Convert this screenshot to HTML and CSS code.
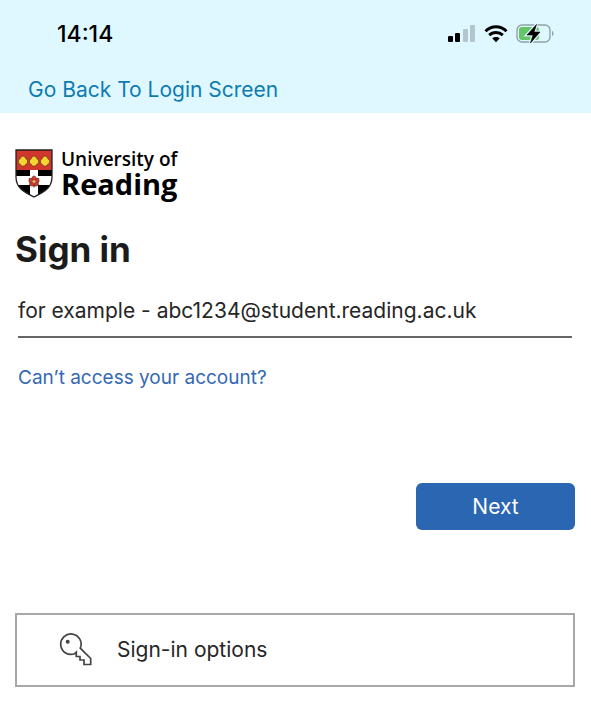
FILE: index.html
```html
<!DOCTYPE html>
<html lang="en">
<head>
    <meta charset="UTF-8">
    <meta name="viewport" content="width=device-width, initial-scale=1.0">
    <title>Sign in</title>
    <link rel="stylesheet" href="styles.css">
</head>
<body>
    <header class="top">
        <div class="status-bar">
            <span class="time">14:14</span>
            <div class="status-icons">
                <svg width="28" height="18" viewBox="0 0 28 18" aria-hidden="true">
                    <rect x="0" y="11" width="5" height="6" rx="1"/>
                    <rect x="7" y="8" width="5" height="9" rx="1"/>
                    <rect x="15" y="4" width="5" height="13" rx="1" fill="#b3c6cb"/>
                    <rect x="22" y="0" width="5" height="17" rx="1" fill="#b3c6cb"/>
                </svg>
                <svg width="24" height="18" viewBox="0 0 24 18" fill="none" stroke="#000" stroke-width="3" aria-hidden="true">
                    <path d="M1.500 6.200C7.500 .2 16.500 .2 22.500 6.200"/>
                    <path d="M5.200 10.200C9 6.600 15 6.600 18.800 10.200"/>
                    <path d="M12 17.200L8.200 13.300C10.400 11.500 13.600 11.500 15.800 13.300Z" fill="#000" stroke="none"/>
                </svg>
                <svg width="38" height="20" viewBox="0 0 38 20" aria-hidden="true">
                    <rect x="1" y="1" width="33" height="17" rx="5" fill="none" stroke="#8fa2a6" stroke-width="1.400"/>
                    <rect x="3" y="3" width="20" height="13" rx="3" fill="#65c466"/>
                    <path d="M36 7v5c2-.6 2-4.400 0-5z" fill="#8fa2a6"/>
                    <path d="M20.500 .5L11 11h6L14.500 19 24 8h-6z" stroke="#dff8ff" stroke-width="3"/>
                    <path d="M20.500 .5L11 11h6L14.500 19 24 8h-6z" stroke="#000" stroke-width=".6"/>
                </svg>
            </div>
        </div>
        <a class="back-link" href="#">Go Back To Login Screen</a>
    </header>

    <main class="login">
        <div class="logo">
            <svg width="38" height="50" viewBox="0 0 38 50" aria-hidden="true">
                <clipPath id="shield">
                    <path d="M1 1H37V28C37 40 27 44 19 48C11 44 1 40 1 28Z"/>
                </clipPath>
                <g clip-path="url(#shield)">
                    <rect width="38" height="50" fill="#fff"/>
                    <rect width="38" height="21" fill="#d0362b"/>
                    <path d="M0 21H15V27H0ZM23 21H38V27H23ZM0 36H15V50H0ZM23 36H38V50H23Z"/>
                </g>
                <g fill="#f4d332" stroke="#3b2a10" stroke-width=".5">
                    <path id="shell" d="M8 7L10 8 11 10 12.500 11 12.500 14 10.500 15.500 9.500 17H6.500L5.500 15.500 3.500 14 3.500 11 5 10 6 8Z"/>
                    <use href="#shell" x="11"/>
                    <use href="#shell" x="22"/>
                </g>
                <path d="M19 26l1.500 3.500 4-.5-2 3.500 1.500 3.500-3.500-.3L19 39l-1.500-3.300-3.500.3 1.500-3.500-2-3.500 4 .5z" fill="#43624a"/>
                <g fill="#d63c30" stroke="#4a1b18" stroke-width=".4">
                    <circle cx="19" cy="29.500" r="2.300"/>
                    <circle cx="22" cy="31.700" r="2.300"/>
                    <circle cx="21" cy="35" r="2.300"/>
                    <circle cx="17" cy="35" r="2.300"/>
                    <circle cx="16" cy="31.700" r="2.300"/>
                </g>
                <circle cx="19" cy="32.500" r="1.500" fill="#d8c06a"/>
                <path d="M1 1H37V28C37 40 27 44 19 48C11 44 1 40 1 28Z" fill="none" stroke="#222" stroke-width="1.300"/>
            </svg>
            <div class="logo-text">
                <span class="logo-small">University of</span>
                <span class="logo-big">Reading</span>
            </div>
        </div>

        <h1>Sign in</h1>

        <form id="login-form">
            <input type="email" id="email" name="email" aria-label="Email address" placeholder="for example - abc1234@student.reading.ac.uk">
            <a class="help-link" href="#">Can’t access your account?</a>
            <button type="submit" class="next">Next</button>
        </form>

        <button type="button" class="options">
            <svg width="34" height="34" viewBox="0 0 34 34" fill="none" stroke="#444" stroke-width="1.700" aria-hidden="true">
                <path d="M21.300 15.200A10.200 10.200 0 1 0 15.600 20.700L17.300 19.200V23.500H21V27H25V31.500H31.700V25.500Z"/>
                <circle cx="8.700" cy="8.700" r="2" fill="#444" stroke="none"/>
            </svg>
            <span>Sign-in options</span>
        </button>
    </main>
</body>
</html>
```
FILE: styles.css
```css
* {
    box-sizing: border-box;
}

body {
    margin: 0;
    font-family: Inter, "Liberation Sans", sans-serif;
    font-size: 21px;
    line-height: 28px;
    color: #262626;
    background-color: #fff;
}

a {
    text-decoration: none;
}

.top {
    padding: 20px 37px 9px 28px;
    background-color: #dff8ff;
}

.status-bar {
    display: flex;
    justify-content: space-between;
    align-items: center;
    margin-bottom: 28px;
    padding-left: 29px;
    color: #000;
}

.time {
    font-size: 23px;
    font-weight: 500;
}

.status-icons {
    display: flex;
    align-items: center;
    gap: 8px;
}

.back-link {
    display: block;
    color: #0e7cb3;
}

.login {
    padding: 36px 16px 30px 15px;
}

.logo {
    display: flex;
    gap: 8px;
    margin-bottom: 28px;
}

.logo-text {
    display: flex;
    flex-direction: column;
    font-family: "Open Sans", sans-serif;
    color: #000;
}

.logo-small {
    font-size: 19px;
    font-weight: 600;
    line-height: 20px;
}

.logo-big {
    font-size: 29px;
    font-weight: 700;
    line-height: 30px;
}

h1 {
    margin: 0 0 22px;
    font-size: 35px;
    line-height: 44px;
    color: #1b1b1b;
}

#login-form {
    display: flex;
    flex-direction: column;
    align-items: flex-start;
    padding-left: 3px;
}

#email {
    align-self: stretch;
    height: 45px;
    margin-right: 3px;
    padding: 0 0 8px;
    border: none;
    border-bottom: 2px solid #666;
    border-radius: 0;
    outline: none;
    font: inherit;
    background: none;
}

#email::placeholder {
    color: #262626;
    opacity: 1;
}

.help-link {
    margin: 26px 0 91px;
    font-size: 19px;
    color: #3468b5;
}

.next {
    align-self: flex-end;
    width: 159px;
    height: 47px;
    border: none;
    border-radius: 6px;
    font: inherit;
    color: #fff;
    background-color: #2a66b1;
    cursor: pointer;
}

.options {
    display: flex;
    align-items: center;
    gap: 24px;
    width: 100%;
    height: 74px;
    margin-top: 83px;
    padding: 0 42px;
    border: 2px solid #a8a8a8;
    font: inherit;
    color: #262626;
    background-color: #fff;
    cursor: pointer;
}
```
